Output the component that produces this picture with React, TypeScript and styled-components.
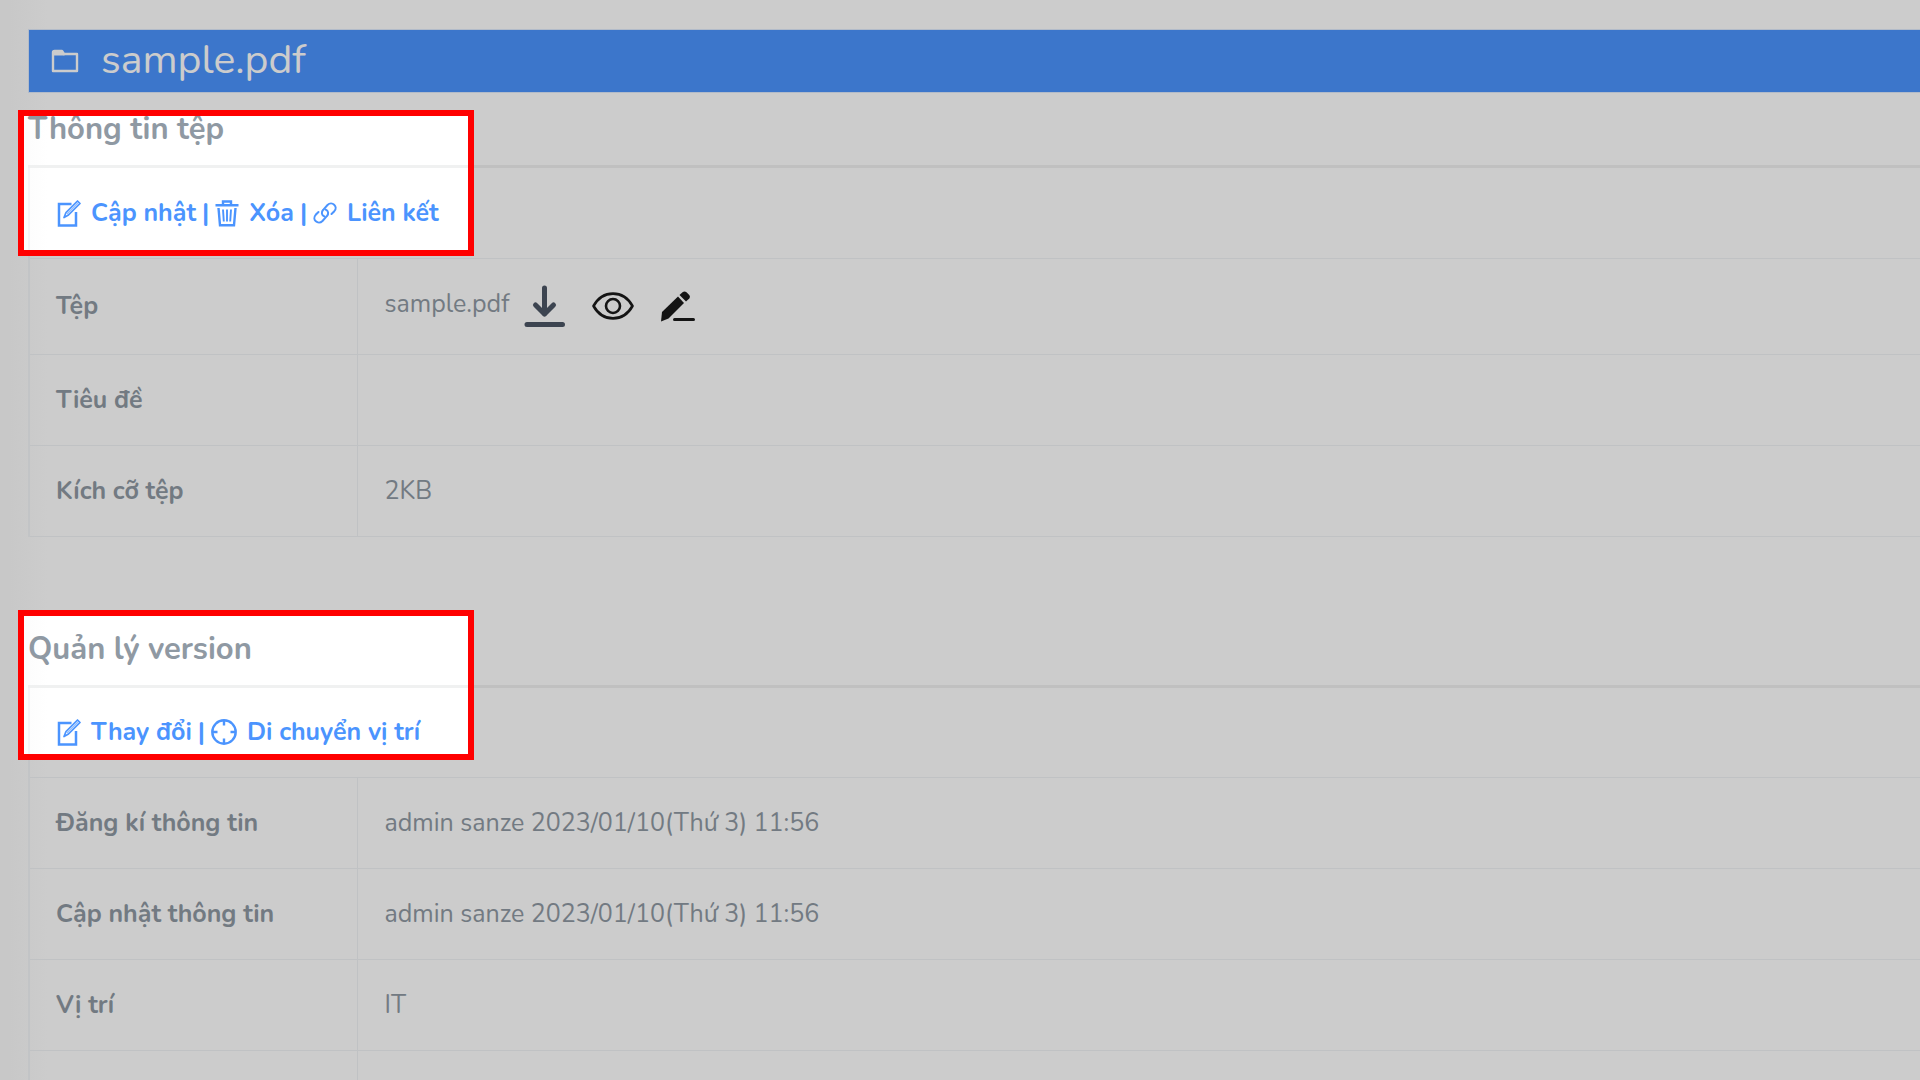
import React from "react";
import styled, { createGlobalStyle } from "styled-components";

const GlobalStyle = createGlobalStyle`
  *, *::before, *::after { box-sizing: border-box; }
  body {
    margin: 0;
    background: #fff;
    color: #8f99a3;
    font-family: Nunito, Lato, "Noto Sans", sans-serif;
    font-size: 25px;
    line-height: 36px;
  }
`;

const Page = styled.div`
  position: relative;
  height: 100vh;
  overflow: hidden;
  padding: 29px 0 0 28px;
  background: linear-gradient(to right, #fafafa 0, #fff 48px);
`;

const TitleBar = styled.header`
  display: flex;
  align-items: center;
  gap: 22px;
  height: 64px;
  padding-left: 22px;
  border: 1px solid #dfeafc;
  border-right: 0;
  background: #4b94fe;
  color: #fff;
`;

const Title = styled.h1`
  margin: 0;
  padding-bottom: 2px;
  font-size: 41px;
  line-height: 60px;
  font-weight: 400;
`;

const Section = styled.section`
  padding-bottom: 76px;
`;

const SectionTitle = styled.h2`
  display: flex;
  align-items: flex-end;
  margin: 0;
  height: 75px;
  padding-bottom: 16px;
  border-bottom: 3px solid #f0f1f1;
  font-size: 31px;
  line-height: 40px;
  font-weight: 700;
`;

const Info = styled.table`
  width: 100%;
  border-collapse: collapse;
  border-left: 2px solid #f3f5f8;
`;

const Row = styled.tr<{ $height?: number }>`
  height: ${(p) => p.$height ?? 91}px;
  border-bottom: 1px solid #f0f3f6;
`;

const Label = styled.th`
  width: 328px;
  padding: 0 26px;
  border-right: 1px solid #f0f3f6;
  text-align: left;
  font-weight: 700;
`;

const Value = styled.td`
  padding: 0 27px;
`;

const Actions = styled.div`
  display: flex;
  align-items: center;
  gap: 6px;
  color: #4b94fe;
  font-weight: 700;
`;

const Action = styled.a`
  display: flex;
  align-items: center;
  gap: 10px;
  color: inherit;
  text-decoration: none;
`;

const FileTools = styled.div`
  display: flex;
  align-items: center;
`;

const FileName = styled.span`
  margin-right: 14px;
  padding-bottom: 4px;
`;

const Tool = styled.button`
  display: flex;
  margin: 0 26px 0 0;
  padding: 0;
  border: 0;
  background: none;
  color: #1a1a1a;
  cursor: pointer;
`;

/* Tour layer: grey shade with clear, red-framed windows over the two toolbars */
const Tour = styled.div`
  position: absolute;
  inset: 0;
  display: grid;
  grid-template: 110px 146px 354px 150px 1fr / 18px 456px 1fr;
  pointer-events: none;
`;

const Shade = styled.div<{ $full?: boolean }>`
  grid-column: ${(p) => (p.$full ? "1 / -1" : "auto")};
  background: rgba(0, 0, 0, 0.2);
`;

const Frame = styled.div`
  border: 6px solid #f00;
`;

const FolderIcon = () => (
  <svg width="28" height="24" viewBox="0 0 28 24" fill="none" stroke="currentColor" strokeWidth="2.400" strokeLinejoin="round">
    <path d="M2 22V3.500Q2 2 3.500 2H11L13 5H26V22Z" />
    <path d="M2 2.500H11.500L13.500 6H2Z" fill="currentColor" strokeWidth="1" />
  </svg>
);

const EditIcon = () => (
  <svg width="24" height="28" viewBox="0 0 24 28" fill="none" stroke="currentColor" strokeWidth="2.500">
    <path d="M14.500 5H2V26.500H19V13" />
    <path d="M7 18.500L9 13.500L20.500 2L23 4.500L11.500 16Z" strokeWidth="1.700" strokeLinejoin="round" />
    <path d="M10 15L21 4" strokeWidth="1.500" opacity="0.600" />
  </svg>
);

const TrashIcon = () => (
  <svg width="24" height="28" viewBox="0 0 24 28" fill="none" stroke="currentColor" strokeWidth="2.400">
    <path d="M0.500 6.300H23.500M8 6V2.500H16V6" />
    <path d="M3.500 9L5 26.300H19L20.500 9" />
    <path d="M8 10.500L8.800 22.500M12 10.500V22.500M16 10.500L15.200 22.500" strokeWidth="1.900" />
  </svg>
);

/* Two interlocked open chain links running up to the right */
const LinkIcon = () => (
  <svg width="24" height="24" viewBox="0 0 24 24" fill="none" stroke="currentColor" strokeWidth="2" strokeLinecap="round">
    <path d="M11.500 15.500C8.500 14.500 8 11 10.200 8.800L14.500 4C19 -0.500 25.500 5.500 21.300 10.200L18.500 13" />
    <path d="M12.500 8.500C15.500 9.500 16 13 13.800 15.200L9.500 20C5 24.500 -1.500 18.500 2.700 13.800L5.500 11" />
  </svg>
);

const TargetIcon = () => (
  <svg width="26" height="26" viewBox="0 0 26 26" fill="none" stroke="currentColor" strokeWidth="2.400">
    <circle cx="13" cy="13" r="11.700" />
    <path d="M13 1V6.500M13 19.500V25M1 13H6.500M19.500 13H25" />
  </svg>
);

const DownloadIcon = () => (
  <svg width="42" height="44" viewBox="0 0 42 44" fill="none" stroke="#4c5564" strokeLinecap="round" strokeLinejoin="round" strokeWidth="5">
    <path d="M20.500 4V30M11.500 21L20.500 30L29.500 21M3 40.500H38.500" />
  </svg>
);

const EyeIcon = () => (
  <svg width="42" height="28" viewBox="0 0 42 28" fill="none" stroke="currentColor" strokeLinejoin="round" strokeWidth="2.600">
    <path d="M1.500 14C6 6 13 1.600 21 1.600S36 6 40.500 14C36 22 29 26.400 21 26.400S6 22 1.500 14Z" />
    <circle cx="21" cy="14" r="7" />
  </svg>
);

const PenIcon = () => (
  <svg width="36" height="31" viewBox="0 0 36 31" fill="currentColor">
    <path d="M1 30.500L2 21L18 5.500L24 12L8.500 27.500Z" />
    <path d="M19.500 4L22.500 1.200Q24.500 -.3 26.500 1.200L29 3.700Q30.700 5.500 29.300 7.500L26 10.500Z" />
    <path d="M14.500 28.500H33.500" stroke="currentColor" strokeWidth="3" strokeLinecap="round" />
  </svg>
);

const actionSets = {
  file: [
    { icon: EditIcon, text: "Cập nhật" },
    { icon: TrashIcon, text: "Xóa" },
    { icon: LinkIcon, text: "Liên kết" },
  ],
  version: [
    { icon: EditIcon, text: "Thay đổi" },
    { icon: TargetIcon, text: "Di chuyển vị trí" },
  ],
};

const ActionRow = ({ items }: { items: typeof actionSets.file }) => (
  <Row $height={90}>
    <Value colSpan={2}>
      <Actions>
        {items.map(({ icon: Icon, text }, i) => (
          <React.Fragment key={text}>
            {i > 0 && <span>|</span>}
            <Action href="#">
              <Icon />
              {text}
            </Action>
          </React.Fragment>
        ))}
      </Actions>
    </Value>
  </Row>
);

const InfoRow = ({ label, height, children }: { label: string; height?: number; children?: React.ReactNode }) => (
  <Row $height={height}>
    <Label scope="row">{label}</Label>
    <Value>{children}</Value>
  </Row>
);

export default function App() {
  return (
    <Page>
      <GlobalStyle />
      <TitleBar>
        <FolderIcon />
        <Title>sample.pdf</Title>
      </TitleBar>
      <main>
        <Section>
          <SectionTitle>Thông tin tệp</SectionTitle>
          <Info>
            <tbody>
              <ActionRow items={actionSets.file} />
              <InfoRow label="Tệp" height={96}>
                <FileTools>
                  <FileName>sample.pdf</FileName>
                  <Tool type="button" aria-label="Tải xuống"><DownloadIcon /></Tool>
                  <Tool type="button" aria-label="Xem"><EyeIcon /></Tool>
                  <Tool type="button" aria-label="Sửa"><PenIcon /></Tool>
                </FileTools>
              </InfoRow>
              <InfoRow label="Tiêu đề" />
              <InfoRow label="Kích cỡ tệp">2KB</InfoRow>
            </tbody>
          </Info>
        </Section>
        <Section>
          <SectionTitle>Quản lý version</SectionTitle>
          <Info>
            <tbody>
              <ActionRow items={actionSets.version} />
              <InfoRow label="Đăng kí thông tin">admin sanze 2023/01/10(Thứ 3) 11:56</InfoRow>
              <InfoRow label="Cập nhật thông tin">admin sanze 2023/01/10(Thứ 3) 11:56</InfoRow>
              <InfoRow label="Vị trí">IT</InfoRow>
              <InfoRow label="" />
            </tbody>
          </Info>
        </Section>
      </main>
      <Tour>
        <Shade $full />
        <Shade />
        <Frame />
        <Shade />
        <Shade $full />
        <Shade />
        <Frame />
        <Shade />
        <Shade $full />
      </Tour>
    </Page>
  );
}
